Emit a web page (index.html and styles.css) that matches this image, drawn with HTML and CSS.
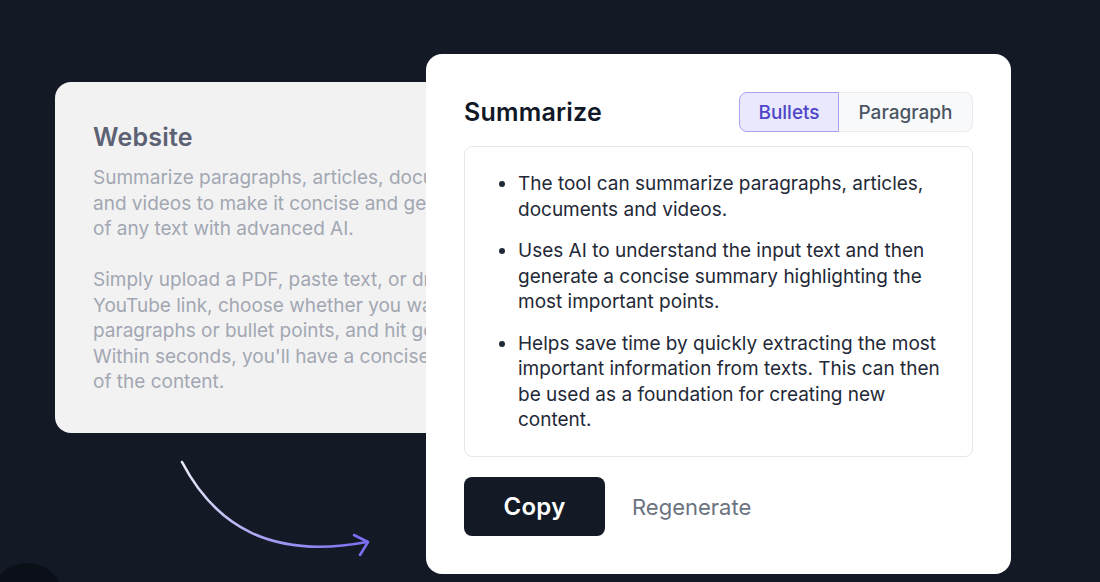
FILE: index.html
```html
<!DOCTYPE html>
<html lang="en">
<head>
<meta charset="utf-8">
<title>Summarize</title>
<link rel="stylesheet" href="styles.css">
</head>
<body>
<div class="stage">
  <div class="source-card">
    <h2 class="source-title">Website</h2>
    <p class="source-text">Summarize paragraphs, articles, documents<br>and videos to make it concise and get the gist<br>of any text with advanced AI.</p>
    <p class="source-text">Simply upload a PDF, paste text, or drop a<br>YouTube link, choose whether you want<br>paragraphs or bullet points, and hit go.<br>Within seconds, you'll have a concise summary<br>of the content.</p>
  </div>

  <div class="summary-card">
    <div class="summary-head">
      <h1 class="summary-title">Summarize</h1>
      <div class="toggle">
        <span class="toggle-btn active">Bullets</span>
        <span class="toggle-btn">Paragraph</span>
      </div>
    </div>
    <div class="summary-box">
      <ul class="summary-list">
        <li>The tool can summarize paragraphs, articles, documents and videos.</li>
        <li>Uses AI to understand the input text and then generate a concise summary highlighting the most important points.</li>
        <li>Helps save time by quickly extracting the most important information from texts. This can then be used as a foundation for creating new content.</li>
      </ul>
    </div>
    <div class="actions">
      <button class="copy-btn">Copy</button>
      <span class="regen">Regenerate</span>
    </div>
  </div>

  <svg class="arrow" viewBox="170 450 210 120" width="210" height="120" aria-hidden="true">
    <defs>
      <linearGradient id="ag" gradientUnits="userSpaceOnUse" x1="182" y1="462" x2="368" y2="542">
        <stop offset="0" stop-color="#ecebf7"/>
        <stop offset="0.55" stop-color="#a59cf2"/>
        <stop offset="1" stop-color="#7c6ef0"/>
      </linearGradient>
    </defs>
    <path d="M182,462 C215,525 270,560 367,542" fill="none" stroke="url(#ag)" stroke-width="2.6" stroke-linecap="round"/>
    <path d="M354,535 L368,542 L360,555" fill="none" stroke="#7c6ef0" stroke-width="2.6" stroke-linecap="round" stroke-linejoin="round"/>
  </svg>
  <div class="blob"></div>
</div>
</body>
</html>
```

FILE: styles.css
```css
* { box-sizing: border-box; }
html, body {
  margin: 0;
  padding: 0;
  background: #131a26;
}
body {
  font-family: Inter, "Noto Sans", "Liberation Sans", sans-serif;
  width: 1100px;
  height: 582px;
  overflow: hidden;
}
.stage {
  position: relative;
  display: flex;
  align-items: flex-start;
  padding: 54px 0 0 55px;
  height: 582px;
  overflow: hidden;
}
.source-card {
  margin-top: 28px;
  width: 500px;
  flex: none;
  background: #f2f2f3;
  border-radius: 16px;
  padding: 40px 38px 38px 38px;
  height: 351px;
}
.source-title {
  margin: 0 0 13px 0;
  font-size: 25px;
  line-height: 30px;
  font-weight: 600;
  color: #5c6273;
  letter-spacing: 0.2px;
}
.source-text {
  margin: 0 0 25.5px 0;
  font-size: 19px;
  line-height: 25.5px;
  color: #a2a7b2;
  white-space: nowrap;
}
.source-text:last-child { margin-bottom: 0; }

.summary-card {
  flex: none;
  margin-left: -129px;
  width: 585px;
  background: #ffffff;
  border-radius: 16px;
  padding: 38px 38px 38px 38px;
}
.summary-head {
  display: flex;
  align-items: center;
  justify-content: space-between;
  height: 40px;
  margin-bottom: 14px;
}
.summary-title {
  margin: 0;
  font-size: 25px;
  font-weight: 600;
  color: #111827;
  letter-spacing: 0.2px;
}
.toggle {
  display: flex;
  height: 40px;
}
.toggle-btn {
  display: flex;
  align-items: center;
  justify-content: center;
  width: 134px;
  font-size: 19px;
  font-weight: 500;
  color: #4b5563;
  background: #f8f9fa;
  border: 1px solid #e7e9ec;
  border-left: none;
  border-radius: 0 8px 8px 0;
}
.toggle-btn.active {
  color: #4f46c9;
  background: #e9e8fc;
  border: 1px solid #a8a2f2;
  border-radius: 8px 0 0 8px;
  width: 100px;
}
.summary-box {
  border: 1px solid #e5e7eb;
  border-radius: 8px;
  padding: 24px 24px 24px 0;
  height: 311px;
}
.summary-list {
  margin: 0;
  padding-left: 53px;
  font-size: 19px;
  line-height: 25.5px;
  color: #1f2937;
}
.summary-list li { margin-bottom: 16px; }
.summary-list li:last-child { margin-bottom: 0; }

.actions {
  display: flex;
  align-items: center;
  gap: 27px;
  margin-top: 20px;
}
.copy-btn {
  font-family: Inter, "Noto Sans", "Liberation Sans", sans-serif;
  height: 59px;
  width: 141px;
  background: #131a26;
  color: #ffffff;
  border: none;
  border-radius: 8px;
  font-size: 24px;
  font-weight: 600;
  letter-spacing: 0.3px;
}
.regen {
  font-size: 22px;
  color: #6b7280;
}
.arrow {
  position: absolute;
  left: 170px;
  top: 450px;
}
.blob {
  position: absolute;
  left: -10px;
  top: 563px;
  width: 74px;
  height: 74px;
  border-radius: 50%;
  background: #0a0f18;
}
```
